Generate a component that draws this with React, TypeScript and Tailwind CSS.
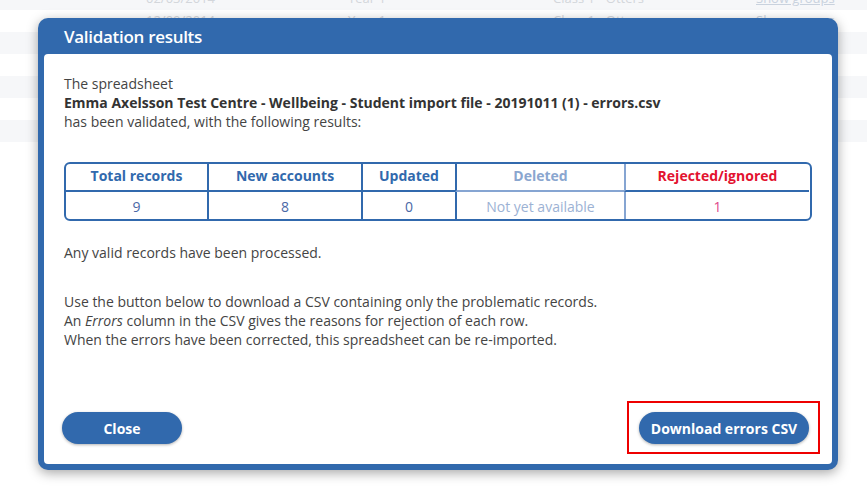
import React from "react";

const font = { fontFamily: '"Open Sans", "Noto Sans", sans-serif' };

function BgRow({ gray, cells }: { gray: boolean; cells?: string[] }) {
  return (
    <div className={`h-[22px] flex items-center text-[13px] text-[#d3d6db] ${gray ? "bg-[#f6f7f9]" : "bg-white"}`}>
      {cells ? (
        <>
          <div className="w-[146px] shrink-0" />
          <div className="w-[202px] shrink-0">{cells[0]}</div>
          <div className="w-[205px] shrink-0">{cells[1]}</div>
          <div className="w-[203px] shrink-0">{cells[2]}</div>
          <div className="underline text-[#c9d2de]">{cells[3]}</div>
        </>
      ) : null}
    </div>
  );
}

export default function App() {
  const headerCell = "h-[28px] flex items-center justify-center pb-[3px] text-[14px] font-bold border-b-2";
  const dataCell = "h-[27px] flex items-center justify-center pt-[1px] text-[14px]";
  return (
    <div className="relative w-[867px] h-[495px] overflow-hidden bg-white" style={font}>
      <div className="-mt-[12px] flex flex-col">
        <BgRow gray cells={["02/03/2014", "Year 1", "Class 1 - Otters", "Show groups"]} />
        <BgRow gray={false} cells={["12/09/2014", "Year 1", "Class 1 - Otters", "Show groups"]} />
        <BgRow gray />
        <BgRow gray={false} />
        <BgRow gray />
        <BgRow gray={false} />
        <BgRow gray />
      </div>

      <div className="absolute left-[38px] top-[18px] w-[800px] h-[452px] bg-[#3169ad] rounded-[10px] px-[6px] pb-[6px] flex flex-col shadow-[0_3px_12px_rgba(0,0,0,0.35)]">
        <div className="h-[36px] shrink-0 flex items-center pl-[20px] pt-[2px]">
          <span className="text-white text-[17px] font-semibold tracking-[-0.3px]">Validation results</span>
        </div>
        <div className="flex-1 bg-white rounded-[4px] px-[20px] pt-[20px] pb-[20px] flex flex-col text-[14px] text-[#444] leading-[19px]">
          <div>The spreadsheet</div>
          <div className="font-bold text-[#333]">Emma Axelsson Test Centre - Wellbeing - Student import file - 20191011 (1) - errors.csv</div>
          <div>has been validated, with the following results:</div>

          <div className="mt-[31px] border-2 border-[#3169ad] rounded-[6px] overflow-hidden grid grid-cols-[141px_154px_94px_169px_185px] leading-normal">
            <div className={`${headerCell} border-[#3169ad] text-[#3169ad]`}>Total records</div>
            <div className={`${headerCell} border-l-2 border-[#3169ad] text-[#3169ad]`}>New accounts</div>
            <div className={`${headerCell} border-l-2 border-[#3169ad] text-[#3169ad]`}>Updated</div>
            <div className={`${headerCell} border-l-2 border-l-[#3169ad] border-b-[#86a5d2] text-[#8aa6cf]`}>Deleted</div>
            <div className={`${headerCell} border-l-2 border-l-[#86a5d2] border-b-[#3169ad] text-[#e3122f]`}>Rejected/ignored</div>

            <div className={`${dataCell} text-[#4a68a6]`}>9</div>
            <div className={`${dataCell} border-l-2 border-[#3169ad] text-[#4a68a6]`}>8</div>
            <div className={`${dataCell} border-l-2 border-[#3169ad] text-[#4a68a6]`}>0</div>
            <div className={`${dataCell} border-l-2 border-[#3169ad] text-[#9cb2d4]`}>Not yet available</div>
            <div className={`${dataCell} border-l-2 border-[#86a5d2] text-[#e0468c]`}>1</div>
          </div>

          <div className="mt-[22px]">Any valid records have been processed.</div>

          <div className="mt-[30px]">Use the button below to download a CSV containing only the problematic records.</div>
          <div>An <em>Errors</em> column in the CSV gives the reasons for rejection of each row.</div>
          <div>When the errors have been corrected, this spreadsheet can be re-imported.</div>

          <div className="mt-auto flex items-center justify-between -ml-[2px] mr-[3px]">
            <button className="w-[120px] h-[32px] rounded-full bg-[#3169ad] text-white text-[14px] font-bold shadow-[0_1px_3px_rgba(0,0,0,0.3)]">
              Close
            </button>
            <div className="relative">
              <button className="w-[170px] h-[32px] rounded-full bg-[#3169ad] text-white text-[14px] font-bold shadow-[0_1px_3px_rgba(0,0,0,0.3)]">
                Download errors CSV
              </button>
              <div className="absolute -left-[12px] -right-[11px] -top-[11px] -bottom-[10px] border-2 border-[#ee0000] pointer-events-none" />
            </div>
          </div>
        </div>
      </div>
    </div>
  );
}
